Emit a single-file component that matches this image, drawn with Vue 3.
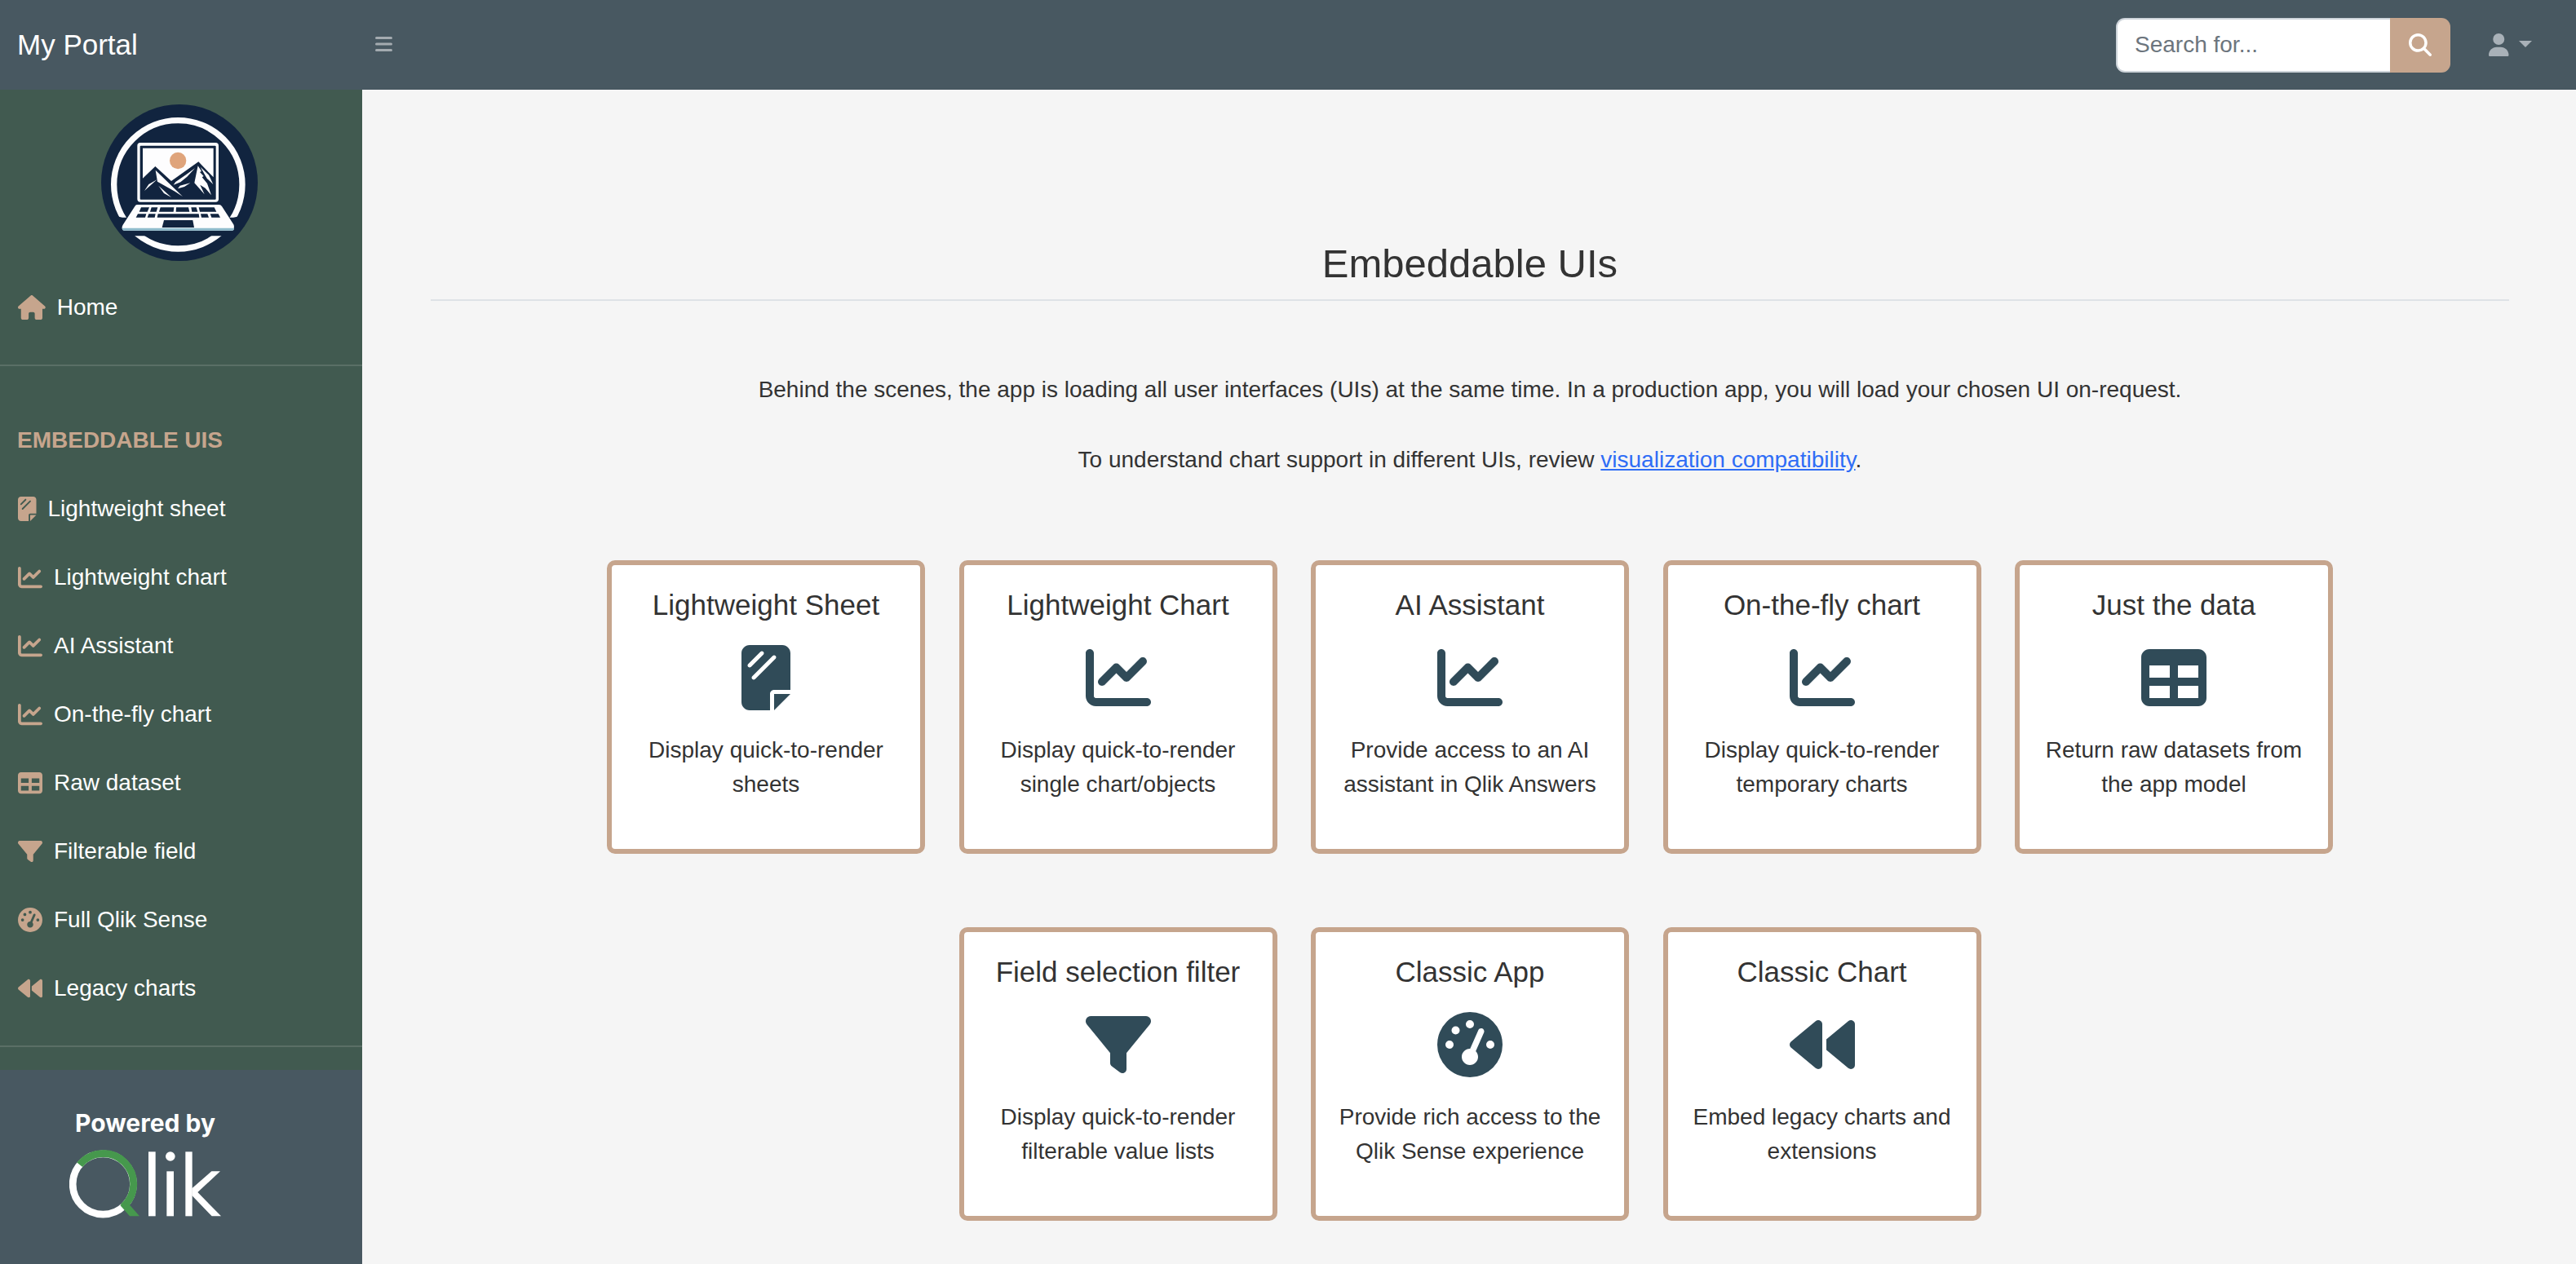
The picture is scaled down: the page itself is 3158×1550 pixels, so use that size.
<script setup>
const icons = {
  house: {
    w: 576,
    d: 'M575.8 255.5c0 18-15 32.1-32 32.1h-32l.7 160.2c0 2.7-.2 5.4-.5 8.1V472c0 22.1-17.9 40-40 40H456c-1.1 0-2.2 0-3.3-.1c-1.4 .1-2.8 .1-4.2 .1H416 392c-22.1 0-40-17.9-40-40V448 384c0-17.7-14.3-32-32-32H256c-17.7 0-32 14.3-32 32v64 24c0 22.1-17.9 40-40 40H160 128.1c-1.5 0-3-.1-4.5-.2c-1.2 .1-2.4 .2-3.6 .2H104c-22.1 0-40-17.9-40-40V360c0-.9 0-1.9 .1-2.8V287.6H32c-18 0-32-14-32-32.1c0-9 3-17 10-24L266.4 8c7-7 15-8 22-8s15 2 21 7L564.8 231.5c8 7 12 15 11 24z',
  },
  sheet: {
    w: 384,
    d: 'M0 448c0 35.3 28.7 64 64 64H224V384c0-17.7 14.3-32 32-32H384V64c0-35.3-28.7-64-64-64H64C28.7 0 0 28.7 0 64V448zM171.3 75.3l-96 96c-6.2 6.2-16.4 6.2-22.6 0s-6.2-16.4 0-22.6l96-96c6.2-6.2 16.4-6.2 22.6 0s6.2 16.4 0 22.6zm96 32l-160 160c-6.2 6.2-16.4 6.2-22.6 0s-6.2-16.4 0-22.6l160-160c6.2-6.2 16.4-6.2 22.6 0s6.2 16.4 0 22.6zM384 384H256V512L384 384z',
  },
  chart: {
    w: 512,
    d: 'M64 64c0-17.7-14.3-32-32-32S0 46.3 0 64V400c0 44.2 35.8 80 80 80H480c17.7 0 32-14.3 32-32s-14.3-32-32-32H80c-8.8 0-16-7.2-16-16V64zm406.6 86.6c12.5-12.5 12.5-32.8 0-45.3s-32.8-12.5-45.3 0L320 210.7l-57.4-57.4c-12.5-12.5-32.8-12.5-45.3 0l-112 112c-12.5 12.5-12.5 32.8 0 45.3s32.8 12.5 45.3 0L240 221.3l57.4 57.4c12.5 12.5 32.8 12.5 45.3 0l128-128z',
  },
  table: {
    w: 512,
    d: 'M64 256V160H224v96H64zm0 64H224v96H64V320zm224 96V320H448v96H288zM448 256H288V160H448v96zM64 32C28.7 32 0 60.7 0 96V416c0 35.3 28.7 64 64 64H448c35.3 0 64-28.7 64-64V96c0-35.3-28.7-64-64-64H64z',
  },
  filter: {
    w: 512,
    d: 'M3.9 54.9C10.5 40.9 24.5 32 40 32H472c15.5 0 29.5 8.9 36.1 22.9s4.6 30.5-5.2 42.5L320 320.9V448c0 12.1-6.8 23.2-17.7 28.6s-23.8 4.3-33.5-3l-64-48c-8.1-6-12.8-15.5-12.8-25.6V320.9L9 97.3C-.7 85.4-2.8 68.8 3.9 54.9z',
  },
  gauge: {
    w: 512,
    d: 'M0 256a256 256 0 1 1 512 0A256 256 0 1 1 0 256zM288 96a32 32 0 1 0-64 0 32 32 0 1 0 64 0zM256 416c35.3 0 64-28.7 64-64c0-17.4-6.9-33.1-18.1-44.6L366 161.7c5.3-12.1-.2-26.3-12.3-31.6s-26.3 .2-31.6 12.3L257.9 288c-.6 0-1.3 0-1.9 0c-35.3 0-64 28.7-64 64s28.7 64 64 64zM176 144a32 32 0 1 0-64 0 32 32 0 1 0 64 0zM96 288a32 32 0 1 0 0-64 32 32 0 1 0 0 64zm352-32a32 32 0 1 0-64 0 32 32 0 1 0 64 0z',
  },
  backward: {
    w: 512,
    d: 'M459.5 440.6c9.5 7.9 22.8 9.7 34.1 4.4s18.4-16.6 18.4-29V96c0-12.4-7.2-23.7-18.4-29s-24.5-3.6-34.1 4.4L288 214.3V256v41.7L459.5 440.6zM256 352V256 128 96c0-12.4-7.2-23.7-18.4-29s-24.5-3.6-34.1 4.4l-192 160C4.2 237.5 0 246.5 0 256s4.2 18.5 11.5 24.6l192 160c9.5 7.9 22.8 9.7 34.1 4.4s18.4-16.6 18.4-29V352z',
  },
}

const navItems = [
  { icon: 'sheet', label: 'Lightweight sheet' },
  { icon: 'chart', label: 'Lightweight chart' },
  { icon: 'chart', label: 'AI Assistant' },
  { icon: 'chart', label: 'On-the-fly chart' },
  { icon: 'table', label: 'Raw dataset' },
  { icon: 'filter', label: 'Filterable field' },
  { icon: 'gauge', label: 'Full Qlik Sense' },
  { icon: 'backward', label: 'Legacy charts' },
]

const cards = [
  { title: 'Lightweight Sheet', icon: 'sheet', lines: ['Display quick-to-render', 'sheets'] },
  { title: 'Lightweight Chart', icon: 'chart', lines: ['Display quick-to-render', 'single chart/objects'] },
  { title: 'AI Assistant', icon: 'chart', lines: ['Provide access to an AI', 'assistant in Qlik Answers'] },
  { title: 'On-the-fly chart', icon: 'chart', lines: ['Display quick-to-render', 'temporary charts'] },
  { title: 'Just the data', icon: 'table', lines: ['Return raw datasets from', 'the app model'] },
  { title: 'Field selection filter', icon: 'filter', lines: ['Display quick-to-render', 'filterable value lists'] },
  { title: 'Classic App', icon: 'gauge', lines: ['Provide rich access to the', 'Qlik Sense experience'] },
  { title: 'Classic Chart', icon: 'backward', lines: ['Embed legacy charts and', 'extensions'] },
]
</script>

<template>
  <div class="page">
    <header class="topbar">
      <a class="brand">My Portal</a>
      <button class="toggle" aria-label="Toggle navigation">
        <svg width="21" height="24" viewBox="0 0 448 512" fill="currentColor">
          <rect y="64" width="448" height="64" rx="32" />
          <rect y="224" width="448" height="64" rx="32" />
          <rect y="384" width="448" height="64" rx="32" />
        </svg>
      </button>
      <form class="search" @submit.prevent>
        <input class="search-input" type="text" placeholder="Search for..." aria-label="Search" />
        <button class="search-btn" aria-label="Search">
          <svg width="28" height="28" viewBox="0 0 512 512" fill="currentColor">
            <path d="M416 208c0 45.9-14.9 88.3-40 122.7L502.6 457.4c12.5 12.5 12.5 32.8 0 45.3s-32.8 12.5-45.3 0L330.7 376c-34.4 25.2-76.8 40-122.7 40C93.1 416 0 322.9 0 208S93.1 0 208 0S416 93.1 416 208zM208 352a144 144 0 1 0 0-288 144 144 0 1 0 0 288z" />
          </svg>
        </button>
      </form>
      <a class="user" aria-label="Account">
        <svg width="24.5" height="28" viewBox="0 0 448 512" fill="currentColor">
          <path d="M224 256A128 128 0 1 0 224 0a128 128 0 1 0 0 256zm-45.7 48C79.8 304 0 383.8 0 482.3C0 498.7 13.3 512 29.7 512H418.3c16.4 0 29.7-13.3 29.7-29.7C448 383.8 368.2 304 269.7 304H178.3z" />
        </svg>
        <span class="caret"></span>
      </a>
    </header>

    <div class="body">
      <aside class="sidebar">
        <svg class="logo" viewBox="72 54 576 576">
          <defs>
            <clipPath id="ring-gaps">
              <path d="M72 54H648V452L558 470 150 470 72 452ZM72 538H648V640H72Z" />
            </clipPath>
          </defs>
          <circle cx="360" cy="342" r="288" fill="#11243f" />
          <circle cx="355" cy="349" r="236" fill="none" stroke="#fcfcfd" stroke-width="22" clip-path="url(#ring-gaps)" />
          <rect x="205" y="195" width="299" height="218" rx="11" fill="#fdfdfe" />
          <rect x="215" y="206" width="279" height="198" rx="3" fill="#11243f" />
          <path d="M225 215H485V322L430 265 330 336 271 282 225 326Z" fill="#fdfdfe" />
          <circle cx="354.500" cy="261" r="30.500" fill="#dfa47b" />
          <g fill="#fdfdfe">
            <path d="M272 296 372 393 343 374 279 338Z" />
            <path d="M277 331 231 372 247 348Z" />
            <path d="M283 353 330 396 303 381Z" />
            <path d="M417 289 388 320 364 340 338 350 346 339 382 314Z" />
            <path d="M400 343 378 357 354 364 362 353Z" />
            <path d="M428 280 441 300 435 303 449 318 443 322 462 345 477 388 455 362 436 350 452 385 415 343 422 308Z" />
            <path d="M437 284 468 314 484 348 461 326Z" />
          </g>
          <path d="M204 423H506Q512 423 516 429L559 496Q562 502 560 510V513Q559 518 554 518H156Q150 518 149 511 148 503 152 497L196 429Q199 423 204 423Z" fill="#fdfdfe" />
          <path d="M149 509H561Q561 518 554 518H156Q150 518 149 509Z" fill="#8dbacb" />
          <g fill="#11243f">
            <path d="M219 433H249L242 449H212ZM257 433H280L275 449H252ZM290 433H340L338 449H285ZM348 433H393L397 449H347ZM403 433H422L427 449H406ZM431 433H488L496 449H435Z" />
            <path d="M207 457H238L234 470H200ZM247 457H272L269 470H242ZM281 457H431L433 470H278ZM438 457H463L468 470H441ZM473 457H503L510 470H478Z" />
            <path d="M303 480H409L414 507H296Z" />
          </g>
        </svg>

        <a class="nav-link">
          <svg class="nav-icon" :viewBox="`0 0 ${icons.house.w} 512`"><path :d="icons.house.d" /></svg>
          <span>Home</span>
        </a>
        <hr class="divider" />
        <div class="nav-heading">EMBEDDABLE UIS</div>
        <a v-for="item in navItems" :key="item.label" class="nav-link">
          <svg class="nav-icon" :viewBox="`0 0 ${icons[item.icon].w} 512`"><path :d="icons[item.icon].d" /></svg>
          <span>{{ item.label }}</span>
        </a>
        <hr class="divider" />

        <footer class="powered">
          <div class="powered-inner">
            <span class="powered-text">Powered by</span>
            <svg class="qlik" width="186" height="84" viewBox="255 420 558 252">
              <circle cx="379" cy="546" r="111.500" fill="none" stroke="#fff" stroke-width="26" />
              <path d="M293 475A111.500 111.500 0 1 1 452 630" fill="none" stroke="#46984d" stroke-width="26.500" />
              <path d="M442 624 477 664H513L476 622 462 612Z" fill="#46984d" />
              <g fill="#fff">
                <rect x="546" y="427" width="26" height="237" />
                <circle cx="626.500" cy="444" r="17.500" />
                <rect x="613" y="499" width="26" height="165" />
                <rect x="682" y="427" width="25" height="237" />
                <path d="M706 562 778 499H810L727 576 813 664H779L706 588Z" />
              </g>
            </svg>
          </div>
        </footer>
      </aside>

      <main class="content">
        <h1 class="title">Embeddable UIs</h1>
        <p class="intro">Behind the scenes, the app is loading all user interfaces (UIs) at the same time. In a production app, you will load your chosen UI on-request.</p>
        <p class="intro">To understand chart support in different UIs, review <a class="link">visualization compatibility</a>.</p>
        <div class="cards">
          <article v-for="card in cards" :key="card.title" class="card">
            <h2 class="card-title">{{ card.title }}</h2>
            <svg class="card-icon" :viewBox="`0 0 ${icons[card.icon].w} 512`"><path :d="icons[card.icon].d" /></svg>
            <p class="card-text">
              <span v-for="line in card.lines" :key="line">{{ line }}</span>
            </p>
          </article>
        </div>
      </main>
    </div>
  </div>
</template>

<style>
body {
  margin: 0;
  background: #f5f5f5;
}
</style>

<style scoped>
.page,
.page * {
  box-sizing: border-box;
}
.page {
  display: flex;
  flex-direction: column;
  height: 1550px;
  overflow: hidden;
  font-family: "Liberation Sans", Arial, Helvetica, sans-serif;
  font-size: 28px;
  line-height: 42px;
  color: #333;
}
button {
  border: 0;
  padding: 0;
  background: none;
  display: flex;
}
.topbar {
  flex: none;
  display: flex;
  align-items: center;
  height: 110px;
  background: #485861;
}
.brand {
  width: 460px;
  padding-left: 21px;
  font-size: 35px;
  line-height: 52px;
  color: #fff;
}
.toggle {
  color: #a4abb0;
  margin-top: -2px;
}
.search {
  display: flex;
  height: 67px;
  margin-left: auto;
  margin-right: 47px;
}
.search-input {
  width: 336px;
  border: 2px solid #ced4da;
  border-right: 0;
  border-radius: 11px 0 0 11px;
  padding: 0 0 0 21px;
  font: inherit;
  background: #fff;
  outline: 0;
}
.search-input::placeholder {
  color: #6c757d;
  opacity: 1;
}
.search-btn {
  width: 74px;
  align-items: center;
  justify-content: center;
  border-radius: 0 11px 11px 0;
  background: #c6a58d;
  color: #fff;
}
.user {
  display: flex;
  align-items: center;
  margin-right: 54px;
  gap: 12.5px;
  color: #a9b1b8;
}
.caret {
  border: 8px solid transparent;
  border-top-color: currentColor;
  border-bottom: 0;
  margin-top: -3px;
}
.body {
  flex: 1;
  display: flex;
  min-height: 0;
}
.sidebar {
  flex: none;
  display: flex;
  flex-direction: column;
  width: 444px;
  padding-top: 18px;
  background: #415a50;
  color: #fff;
}
.logo {
  flex: none;
  width: 192px;
  height: 192px;
  margin: 0 0 15px 124px;
}
.nav-link {
  flex: none;
  display: flex;
  align-items: center;
  height: 84px;
  padding-left: 22px;
  gap: 14px;
}
.nav-icon {
  height: 30px;
  fill: #c6a58d;
  overflow: visible;
}
.divider {
  flex: none;
  width: 100%;
  height: 2px;
  margin: 28px 0;
  border: 0;
  background: #5a6f66;
}
.nav-heading {
  flex: none;
  padding: 42px 21px 21px;
  font-weight: 700;
  color: #c6a58d;
}
.powered {
  flex: 1;
  padding: 47px 0 0 85px;
  background: #485861;
}
.powered-inner {
  display: flex;
  flex-direction: column;
  align-items: center;
  width: 186px;
}
.powered-text {
  margin-bottom: 15px;
  font-family: Inter, sans-serif;
  font-size: 30px;
  font-weight: 700;
  line-height: 36px;
  white-space: nowrap;
}
.content {
  flex: 1;
  padding: 184px 82px 0 84px;
  text-align: center;
}
.title {
  height: 75px;
  margin: 0 0 88px;
  border-bottom: 2px solid #dee2e6;
  font-size: 49px;
  font-weight: 400;
  line-height: 59px;
}
.intro {
  margin: 0 0 44px;
}
.link {
  color: #2f6df6;
  text-decoration: underline;
}
.cards {
  display: flex;
  flex-wrap: wrap;
  justify-content: center;
  gap: 90px 41.500px;
  width: 2300px;
  margin: 102px auto 0;
}
.card {
  display: flex;
  flex-direction: column;
  align-items: center;
  width: 390px;
  height: 360px;
  padding: 28px 0;
  border: 6px solid #c6a58d;
  border-radius: 10px;
  background: #fff;
}
.card-title {
  margin: 0 0 28px;
  font-size: 35px;
  font-weight: 400;
  line-height: 42px;
}
.card-icon {
  flex: none;
  height: 80px;
  fill: #304b58;
}
.card-text {
  display: flex;
  flex-direction: column;
  margin: 28px 0 0;
}
</style>
